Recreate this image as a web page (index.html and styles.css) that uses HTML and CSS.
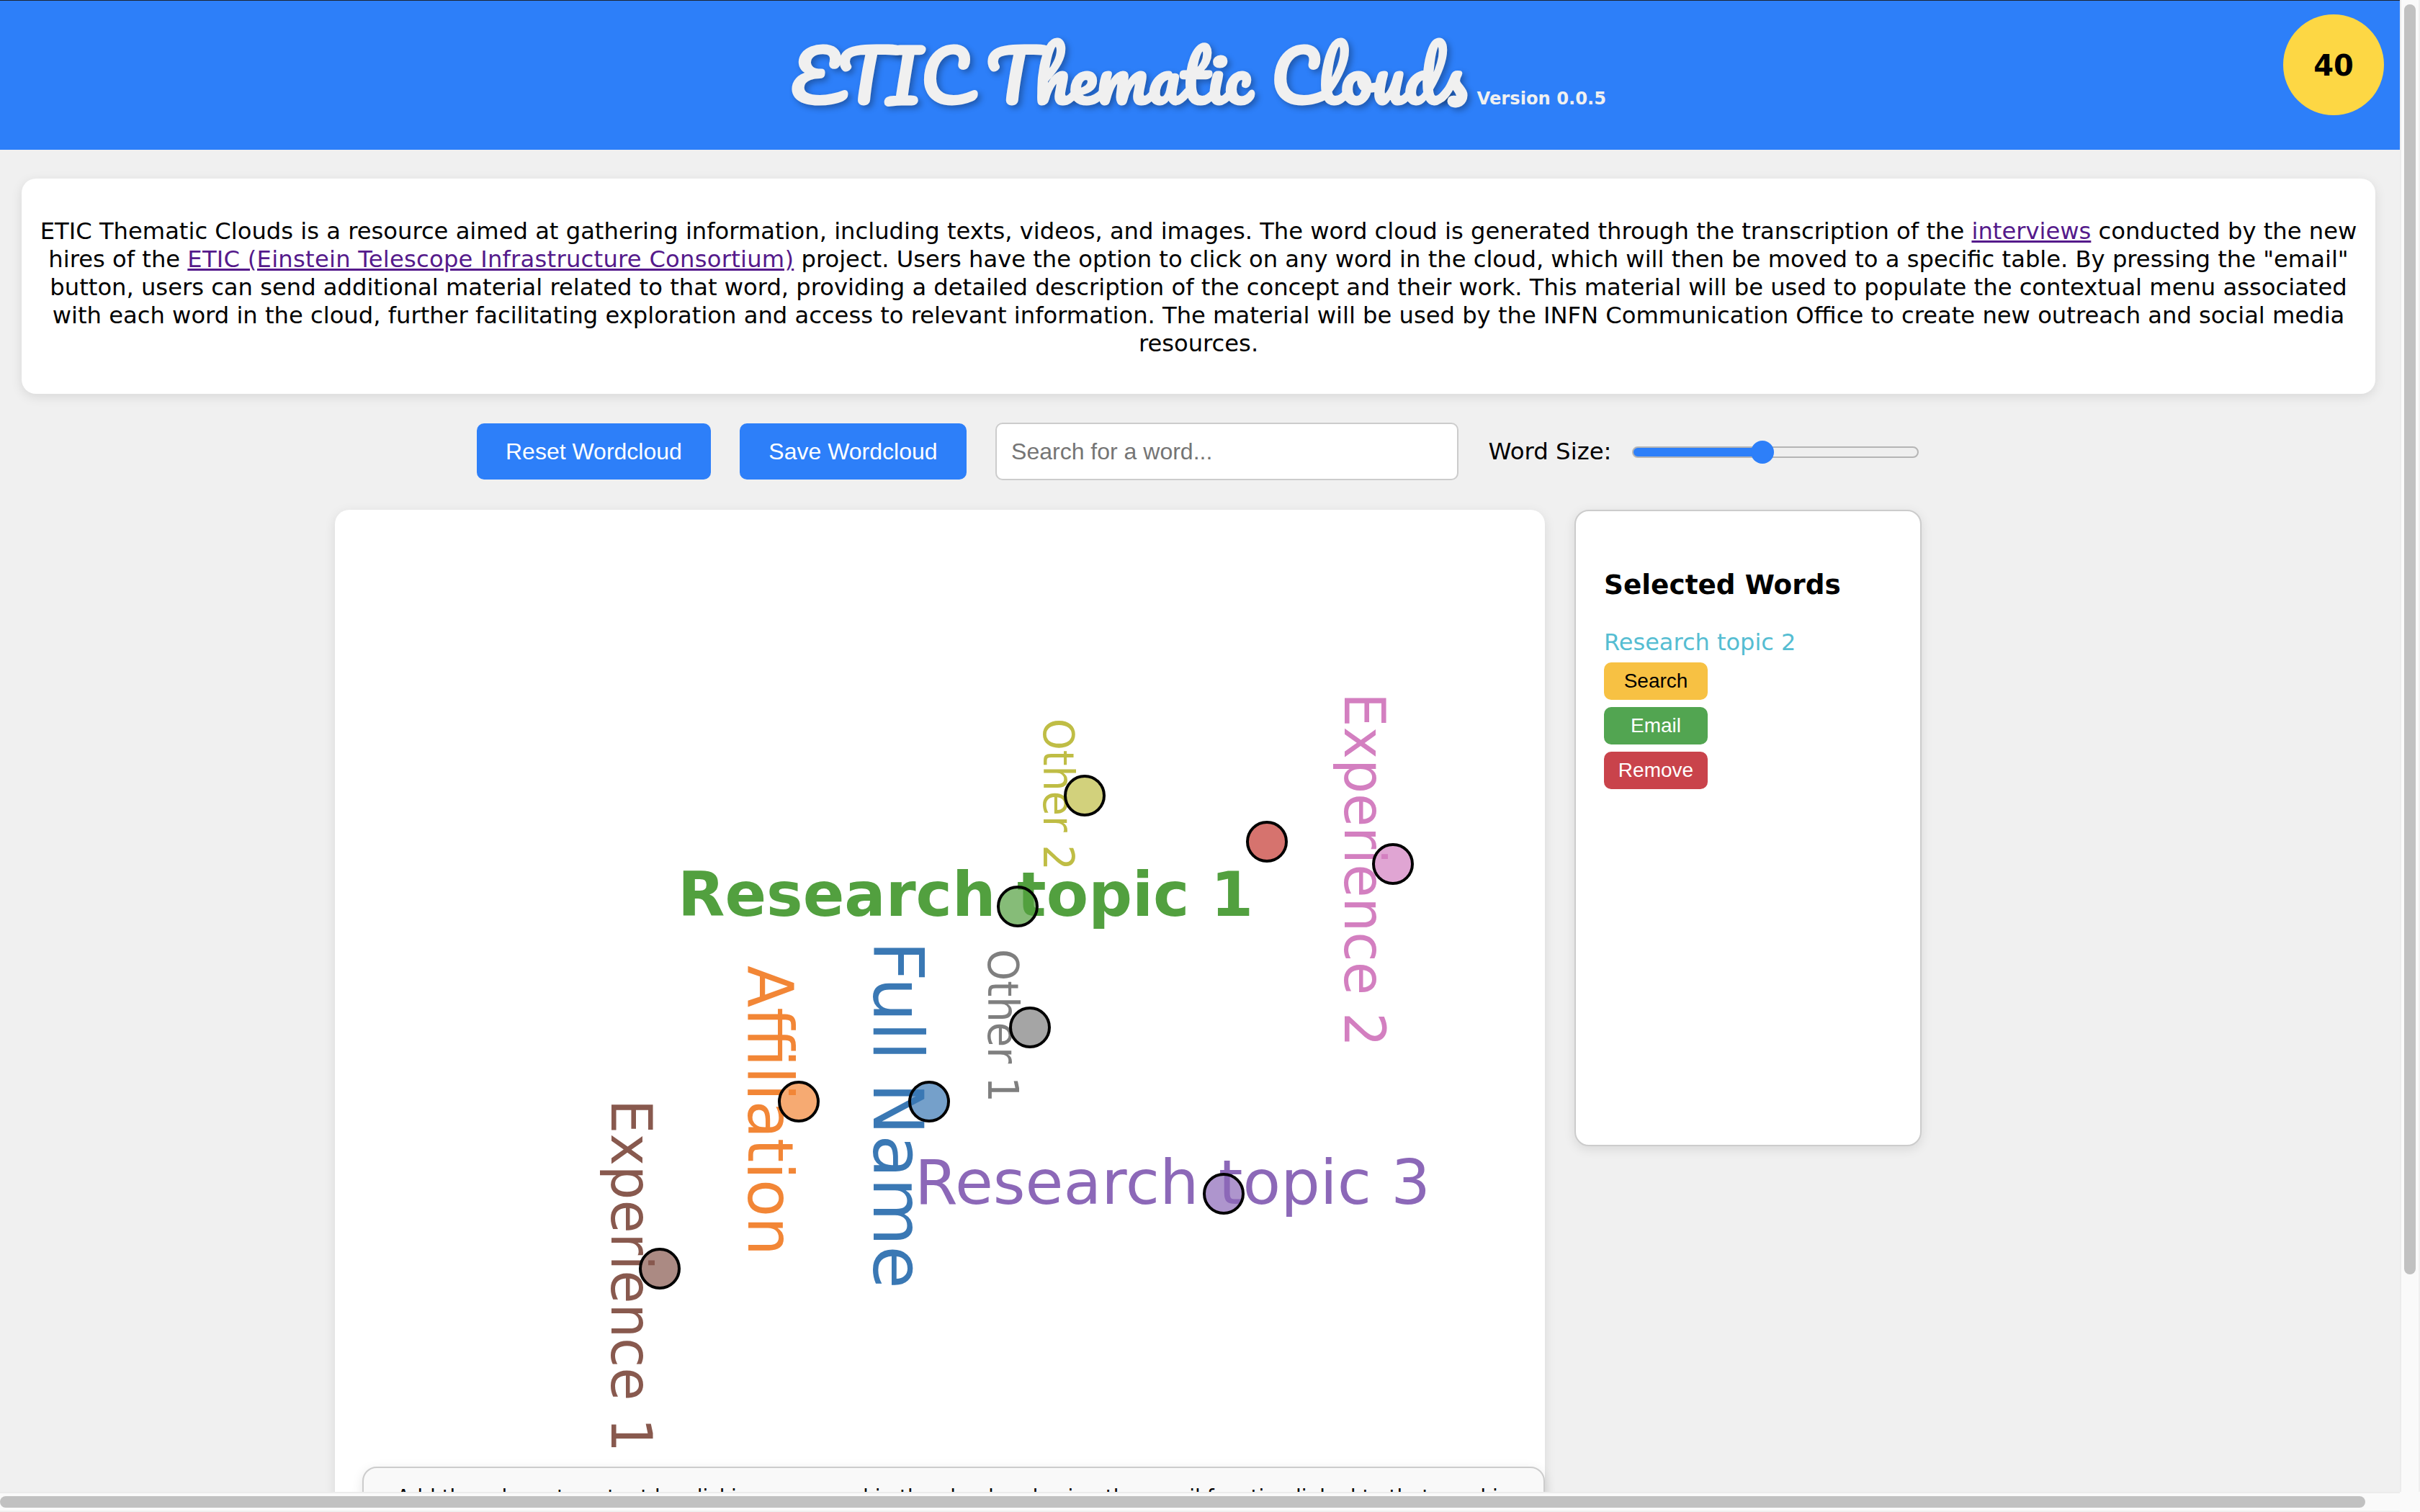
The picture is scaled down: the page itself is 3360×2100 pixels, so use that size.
FILE: index.html
```html
<!DOCTYPE html>
<html lang="en">
<head>
  <meta charset="UTF-8" />
  <meta name="viewport" content="width=device-width, initial-scale=1.0" />
  <title>ETIC Thematic Clouds</title>
  <link rel="stylesheet" href="styles.css">
</head>
<body>
  <div class="window">
    <main class="page">
      <header class="topbar">
        <h1 class="title">ETIC Thematic Clouds<span class="version">Version 0.0.5</span></h1>
        <div class="counter">40</div>
      </header>

      <section class="intro">
        <p>ETIC Thematic Clouds is a resource aimed at gathering information, including texts, videos, and images. The word cloud is generated through the transcription of the <a href="#">interviews</a> conducted by the new hires of the <a class="link-wide" href="#">ETIC (Einstein Telescope Infrastructure Consortium)</a> project. Users have the option to click on any word in the cloud, which will then be moved to a specific table. By pressing the "email" button, users can send additional material related to that word, providing a detailed description of the concept and their work. This material will be used to populate the contextual menu associated with each word in the cloud, further facilitating exploration and access to relevant information. The material will be used by the INFN Communication Office to create new outreach and social media resources.</p>
      </section>

      <div class="controls">
        <button class="btn-main">Reset Wordcloud</button>
        <button class="btn-main">Save Wordcloud</button>
        <input class="search" type="text" placeholder="Search for a word...">
        <label class="size-label" for="size">Word Size:</label>
        <input class="size" id="size" type="range" min="0" max="100" value="45">
      </div>

      <div class="workspace">
        <div class="cloud-card">
          <svg class="cloud" viewBox="0 0 1680 1329" width="1680" height="1329">
            <text class="word" transform="translate(476 564)" font-size="85" font-weight="bold" fill="#52a03f">Research topic 1</text>
            <text class="word" transform="translate(805 964)" font-size="86" fill="#8c68b8">Research topic 3</text>
            <text class="word" transform="translate(1402 254) rotate(90)" font-size="78" textLength="492" lengthAdjust="spacingAndGlyphs" fill="#d37fc0">Experience 2</text>
            <text class="word" transform="translate(984 290) rotate(90)" font-size="58" textLength="211" lengthAdjust="spacingAndGlyphs" fill="#bfbd45">Other 2</text>
            <text class="word" transform="translate(907 610) rotate(90)" font-size="58" textLength="213" lengthAdjust="spacingAndGlyphs" fill="#7f7f7f">Other 1</text>
            <text class="word" transform="translate(748 599) rotate(90)" font-size="96" textLength="483" lengthAdjust="spacingAndGlyphs" fill="#3a78b4">Full Name</text>
            <text class="word" transform="translate(574 633) rotate(90)" font-size="88" textLength="403" lengthAdjust="spacingAndGlyphs" fill="#f28636">Affiliation</text>
            <text class="word" transform="translate(384 819) rotate(90)" font-size="78" textLength="490" lengthAdjust="spacingAndGlyphs" fill="#88594e">Experience 1</text>
            <g class="dots">
              <circle cx="1041" cy="397" r="27" fill="#bfbd45" />
              <circle cx="1294" cy="461" r="27" fill="#c43731" />
              <circle cx="1469" cy="492" r="27" fill="#d37fc0" />
              <circle cx="948" cy="551" r="27" fill="#52a03f" />
              <circle cx="965" cy="719" r="27" fill="#7f7f7f" />
              <circle cx="644" cy="822" r="27" fill="#f28636" />
              <circle cx="825" cy="822" r="27" fill="#3a78b4" />
              <circle cx="1234" cy="950" r="27" fill="#8c68b8" />
              <circle cx="451" cy="1054" r="27" fill="#88594e" />
            </g>
          </svg>
          <div class="note">Add the relevant content by clicking on a word in the cloud and using the email function linked to that word in</div>
        </div>

        <aside class="selected">
          <h3>Selected Words</h3>
          <div class="picked">Research topic 2</div>
          <div class="picked-actions">
            <button class="btn-small btn-search">Search</button>
            <button class="btn-small btn-email">Email</button>
            <button class="btn-small btn-remove">Remove</button>
          </div>
        </aside>
      </div>
    </main>

    <div class="bar-v"><div class="thumb-v"></div></div>
    <div class="bar-h"><div class="thumb-h"></div></div>
    <div class="bar-corner"></div>
  </div>
</body>
</html>
```

FILE: styles.css
```css
* {
  box-sizing: border-box;
}
html, body {
  margin: 0;
  height: 100%;
  overflow: hidden;
}
body {
  background-color: #f0f0f0;
  color: #000;
  font-family: "DejaVu Sans", Verdana, sans-serif;
  font-size: 32px;
}
.window {
  display: grid;
  grid-template-columns: 3332px 28px;
  grid-template-rows: 2072px 28px;
  height: 2100px;
}
.page {
  overflow: hidden;
}

/* header */
.topbar {
  position: relative;
  height: 208px;
  padding: 41px 4px 0 0;
  background-color: #2d7ff9;
  border-top: 1px solid #1c2430;
  text-align: center;
}
.title {
  margin: 0;
  font-family: "Pacifico", "Liberation Serif", serif;
  font-weight: bold;
  font-size: 96px;
  line-height: 124px;
  color: #f0f0f0;
  text-shadow: 4px 4px 8px rgba(0, 0, 0, 0.3);
}
.version {
  margin-left: 14px;
  font-family: "DejaVu Sans", Verdana, sans-serif;
  font-size: 24.2px;
  text-shadow: none;
}
.counter {
  position: absolute;
  top: 19px;
  right: 22px;
  display: flex;
  align-items: center;
  justify-content: center;
  width: 140px;
  height: 140px;
  padding-top: 2px;
  border-radius: 50%;
  background-color: #fdd744;
  font-size: 40px;
  font-weight: bold;
}

/* intro */
.intro {
  margin: 40px 34px 0 30px;
  height: 299px;
  padding: 54px 20px 0;
  background: #fff;
  border-radius: 20px;
  box-shadow: 0 4px 16px rgba(0, 0, 0, 0.1);
  text-align: center;
  font-size: 32.2px;
  line-height: 39px;
}
.intro p {
  margin: 0;
}
.intro a {
  color: #551a8b;
}
.intro .link-wide {
  letter-spacing: 0.25px;
}

/* controls */
.controls {
  display: flex;
  align-items: center;
  gap: 40.5px;
  height: 80px;
  margin-top: 40px;
  padding-left: 662px;
}
.btn-main {
  height: 78px;
  padding: 0 40px;
  border: none;
  border-radius: 10px;
  background-color: #2d7ff9;
  color: #fff;
  font-family: "Liberation Sans", Arial, sans-serif;
  font-size: 32px;
}
.search {
  width: 643px;
  height: 80px;
  padding: 0 20px;
  border: 2px solid #ccc;
  border-radius: 10px;
  background: #fff;
  font-family: "Liberation Sans", Arial, sans-serif;
  font-size: 32px;
}
.search::placeholder {
  color: #757575;
}
.size-label {
  margin-left: 1px;
  margin-right: -12px;
  font-size: 32.4px;
}
.size {
  appearance: none;
  -webkit-appearance: none;
  width: 398px;
  height: 16px;
  margin: 2px 0 0;
  border: 2px solid #b5b5b5;
  border-radius: 8px;
  background: linear-gradient(to right, #2d7ff9 45%, #efefef 45%);
}
.size::-webkit-slider-thumb {
  -webkit-appearance: none;
  width: 32px;
  height: 32px;
  border-radius: 50%;
  background: #2d7ff9;
}

/* cloud and side table */
.workspace {
  display: flex;
  align-items: flex-start;
  gap: 41px;
  margin-top: 41px;
  padding-left: 465px;
}
.cloud-card {
  width: 1680px;
  background: #fff;
  border-radius: 20px;
  box-shadow: 0 4px 16px rgba(0, 0, 0, 0.1);
}
.cloud {
  display: block;
}
.word {
  font-family: "DejaVu Sans", Verdana, sans-serif;
}
.dots circle {
  fill-opacity: 0.7;
  stroke: #000;
  stroke-width: 4;
}
.note {
  margin-left: 38px;
  height: 200px;
  padding: 24px 40px;
  background: #f9f9f9;
  border: 2px solid #ccc;
  border-radius: 20px;
  box-shadow: 0 4px 16px rgba(0, 0, 0, 0.1);
  font-size: 28px;
  text-align: center;
}
.selected {
  width: 482px;
  height: 884px;
  padding: 0 39px;
  background: #fff;
  border: 2px solid #ccc;
  border-radius: 20px;
  box-shadow: 0 4px 16px rgba(0, 0, 0, 0.1);
}
.selected h3 {
  margin: 80px 0 38px;
  font-size: 37.4px;
  line-height: 44px;
}
.picked {
  color: #55bdd2;
  line-height: 40px;
}
.picked-actions {
  display: flex;
  flex-direction: column;
  align-items: flex-start;
  gap: 10px;
  margin-top: 8px;
}
.btn-small {
  width: 144px;
  height: 52px;
  padding: 0;
  border: none;
  border-radius: 10px;
  font-family: "Liberation Sans", Arial, sans-serif;
  font-size: 28px;
  color: #fff;
}
.btn-search {
  background-color: #f7c143;
  color: #000;
}
.btn-email {
  background-color: #52a551;
}
.btn-remove {
  background-color: #c9434b;
}

/* scrollbars */
.bar-v {
  padding: 6px 4px 0 6px;
  background: #fafafa;
  border-left: 2px solid #ececec;
  border-right: 2px solid #f0f0f0;
}
.thumb-v {
  width: 16px;
  height: 1764px;
  margin-left: -2px;
  border-radius: 8px;
  background: #c1c1c1;
}
.bar-h {
  padding-top: 6px;
  background: #fafafa;
  border-top: 2px solid #ececec;
  border-bottom: 2px solid #f0f0f0;
}
.thumb-h {
  width: 3284px;
  height: 16px;
  margin-top: -2px;
  border-radius: 8px;
  background: #c1c1c1;
}
.bar-corner {
  background: #fafafa;
}
```
